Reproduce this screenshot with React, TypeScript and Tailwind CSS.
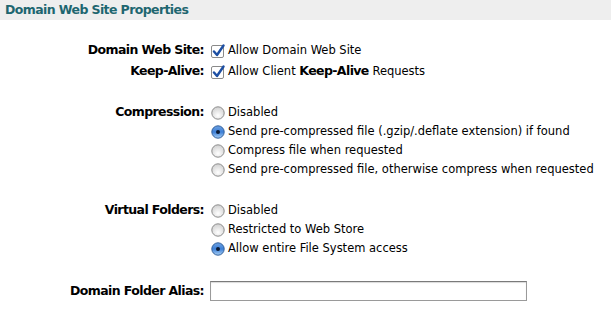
import React from "react";

const font = { fontFamily: '"DejaVu Sans", Verdana, sans-serif' };

function Check() {
  return (
    <svg width="14" height="14" viewBox="0 0 14 14" className="shrink-0">
      <rect x="0.5" y="1.5" width="12" height="12" rx="1.5" fill="#fff" stroke="#8a8a8a" />
      <path d="M3 7.5 L6 11 L12.5 1.5" fill="none" stroke="#1d4fa3" strokeWidth="2.4" strokeLinecap="round" strokeLinejoin="round" />
    </svg>
  );
}

function Radio({ on }: { on?: boolean }) {
  return (
    <svg width="14" height="14" viewBox="0 0 14 14" className="shrink-0">
      <defs>
        <radialGradient id="rOff" cx="50%" cy="70%" r="60%">
          <stop offset="0%" stopColor="#ffffff" />
          <stop offset="100%" stopColor="#d6d6d6" />
        </radialGradient>
        <linearGradient id="rOn" x1="0" y1="0" x2="0" y2="1">
          <stop offset="0%" stopColor="#6ea2e2" />
          <stop offset="50%" stopColor="#3d7fd6" />
          <stop offset="100%" stopColor="#a9d0f5" />
        </linearGradient>
      </defs>
      <circle cx="7" cy="7" r="6.2" fill={on ? "url(#rOn)" : "url(#rOff)"} stroke={on ? "#35629c" : "#8c8c8c"} />
      {on && <circle cx="7" cy="7" r="2" fill="#0b1a33" />}
    </svg>
  );
}

function Label({ children }: { children: React.ReactNode }) {
  return (
    <div className="w-[211px] pr-[7px] text-right font-bold text-[12.5px] tracking-[-0.6px] text-black shrink-0">
      {children}
    </div>
  );
}

function OptionRow({ label, children, h = "h-[19px]" }: { label?: string; children: React.ReactNode; h?: string }) {
  return (
    <div className={`flex items-center ${h}`}>
      <Label>{label ?? ""}</Label>
      <div className="flex items-center gap-[3px] text-[11.5px] text-black whitespace-nowrap">{children}</div>
    </div>
  );
}

export default function App() {
  return (
    <div className="w-[611px] h-[318px] bg-white overflow-hidden" style={font}>
      <div className="h-[20px] bg-[#eeeeee] flex items-center px-[5px]">
        <span className="text-[12.5px] tracking-[-0.6px] font-bold text-[#1e6670]">Domain Web Site Properties</span>
      </div>

      <div className="mt-[20px]">
        <OptionRow label="Domain Web Site:" h="h-[21px]">
          <Check />
          <span>Allow Domain Web Site</span>
        </OptionRow>
        <OptionRow label="Keep-Alive:" h="h-[21px]">
          <Check />
          <span>
            Allow Client <b className="text-[12.5px] tracking-[-0.6px]">Keep-Alive</b> Requests
          </span>
        </OptionRow>
      </div>

      <div className="mt-[21px]">
        <OptionRow label="Compression:">
          <Radio />
          <span>Disabled</span>
        </OptionRow>
        <OptionRow>
          <Radio on />
          <span>Send pre-compressed file (.gzip/.deflate extension) if found</span>
        </OptionRow>
        <OptionRow>
          <Radio />
          <span>Compress file when requested</span>
        </OptionRow>
        <OptionRow>
          <Radio />
          <span>Send pre-compressed file, otherwise compress when requested</span>
        </OptionRow>
      </div>

      <div className="mt-[22px]">
        <OptionRow label="Virtual Folders:">
          <Radio />
          <span>Disabled</span>
        </OptionRow>
        <OptionRow>
          <Radio />
          <span>Restricted to Web Store</span>
        </OptionRow>
        <OptionRow>
          <Radio on />
          <span>Allow entire File System access</span>
        </OptionRow>
      </div>

      <div className="mt-[23px] flex items-center h-[20px]">
        <Label>Domain Folder Alias:</Label>
        <input
          type="text"
          className="-ml-[1px] w-[317px] h-[20px] border border-[#9a9a9a] border-t-[#7a7a7a] bg-white outline-none px-1 text-[12px] shadow-[inset_0_1px_1px_rgba(0,0,0,0.15)]"
        />
      </div>
    </div>
  );
}
